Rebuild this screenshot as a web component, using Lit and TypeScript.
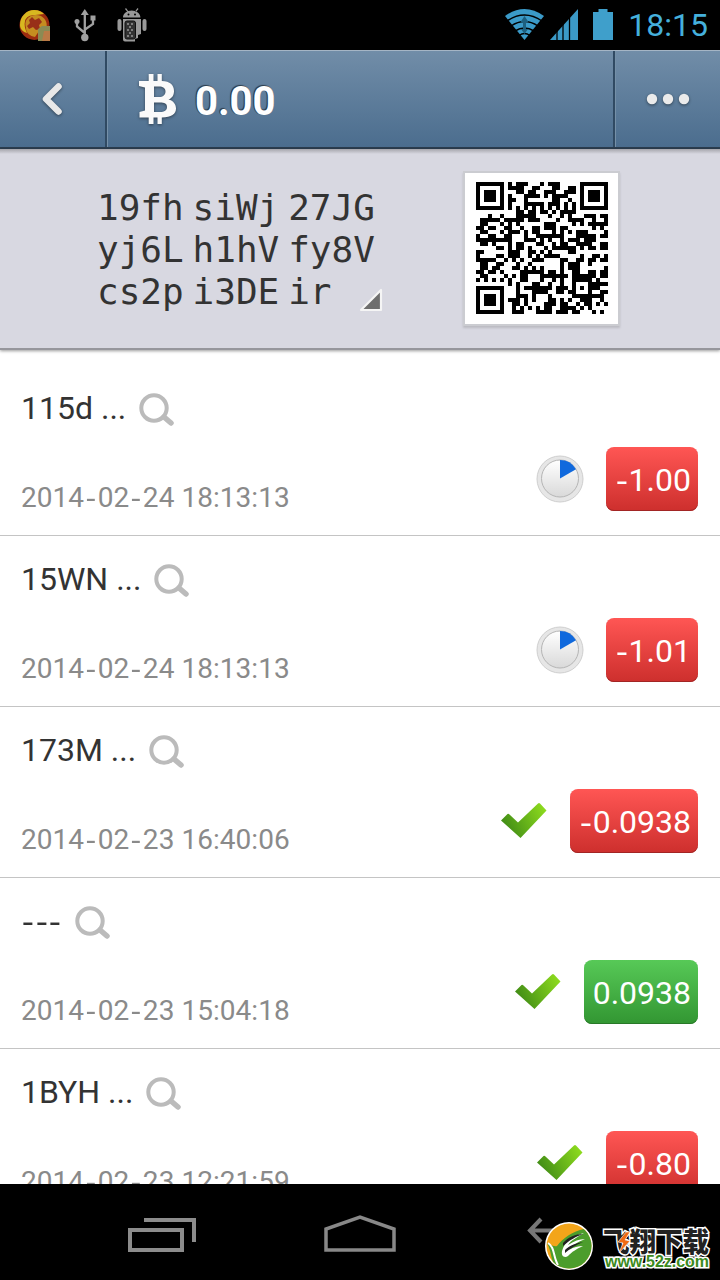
import { LitElement, html, css, svg } from "lit";
import { customElement, property } from "lit/decorators.js";
import { classMap } from "lit/directives/class-map.js";

/* ---- QR code: version 4, level H, byte mode, mask 7 ---- */
const SIZE = 33;

function gfMul(a: number, b: number): number {
  let r = 0;
  for (let i = 7; i >= 0; i--) {
    r = (r << 1) ^ ((r >>> 7) * 0x11d);
    r ^= ((b >>> i) & 1) * a;
  }
  return r & 0xff;
}

function generator(degree: number): number[] {
  const g = new Array(degree).fill(0);
  g[degree - 1] = 1;
  let root = 1;
  for (let i = 0; i < degree; i++) {
    for (let j = 0; j < degree; j++) {
      g[j] = gfMul(g[j], root);
      if (j + 1 < degree) g[j] ^= g[j + 1];
    }
    root = gfMul(root, 2);
  }
  return g;
}

function remainder(data: number[], gen: number[]): number[] {
  const r = gen.map(() => 0);
  for (const b of data) {
    const f = b ^ (r.shift() as number);
    r.push(0);
    gen.forEach((c, i) => (r[i] ^= gfMul(c, f)));
  }
  return r;
}

function qrPath(text: string): string {
  const bits: number[] = [];
  const put = (v: number, n: number) => {
    for (let i = n - 1; i >= 0; i--) bits.push((v >>> i) & 1);
  };
  put(4, 4);
  put(text.length, 8);
  for (const c of text) put(c.charCodeAt(0), 8);
  while (bits.length < 288) bits.push(0);
  const bytes: number[] = [];
  for (let i = 0; i < 288; i += 8) bytes.push(parseInt(bits.slice(i, i + 8).join(""), 2));

  const gen = generator(16);
  const blocks = [0, 1, 2, 3].map((i) => bytes.slice(i * 9, i * 9 + 9));
  const ecc = blocks.map((b) => remainder(b, gen));
  const words: number[] = [];
  for (let i = 0; i < 9; i++) for (const b of blocks) words.push(b[i]);
  for (let i = 0; i < 16; i++) for (const e of ecc) words.push(e[i]);

  const m: boolean[][] = Array.from({ length: SIZE }, () => new Array(SIZE).fill(false));
  const fn: boolean[][] = Array.from({ length: SIZE }, () => new Array(SIZE).fill(false));
  const set = (x: number, y: number, v: boolean) => {
    if (x < 0 || y < 0 || x >= SIZE || y >= SIZE) return;
    m[y][x] = v;
    fn[y][x] = true;
  };
  for (let i = 0; i < SIZE; i++) {
    set(6, i, i % 2 === 0);
    set(i, 6, i % 2 === 0);
  }
  for (const [cx, cy] of [[3, 3], [SIZE - 4, 3], [3, SIZE - 4]])
    for (let dy = -4; dy <= 4; dy++)
      for (let dx = -4; dx <= 4; dx++) {
        const d = Math.max(Math.abs(dx), Math.abs(dy));
        set(cx + dx, cy + dy, d !== 2 && d !== 4);
      }
  for (let dy = -2; dy <= 2; dy++)
    for (let dx = -2; dx <= 2; dx++)
      set(26 + dx, 26 + dy, Math.max(Math.abs(dx), Math.abs(dy)) !== 1);

  const fmt = 0b000100000111011;
  const bit = (i: number) => ((fmt >>> i) & 1) === 1;
  for (let i = 0; i <= 5; i++) set(8, i, bit(i));
  set(8, 7, bit(6));
  set(8, 8, bit(7));
  set(7, 8, bit(8));
  for (let i = 9; i < 15; i++) set(14 - i, 8, bit(i));
  for (let i = 0; i < 8; i++) set(SIZE - 1 - i, 8, bit(i));
  for (let i = 8; i < 15; i++) set(8, SIZE - 15 + i, bit(i));
  set(8, SIZE - 8, true);

  let k = 0;
  for (let right = SIZE - 1; right >= 1; right -= 2) {
    if (right === 6) right = 5;
    for (let v = 0; v < SIZE; v++)
      for (let j = 0; j < 2; j++) {
        const x = right - j;
        const up = ((right + 1) & 2) === 0;
        const y = up ? SIZE - 1 - v : v;
        if (fn[y][x]) continue;
        if (k < 800) m[y][x] = ((words[k >>> 3] >>> (7 - (k & 7))) & 1) === 1;
        k++;
        if ((((x + y) % 2) + ((x * y) % 3)) % 2 === 0) m[y][x] = !m[y][x];
      }
  }
  let d = "";
  m.forEach((row, y) => row.forEach((on, x) => (d += on ? `M${x} ${y}h1v1h-1z` : "")));
  return d;
}

interface Tx {
  addr: string;
  date: string;
  amount: string;
  confirmed: boolean;
}

@customElement("status-bar")
class StatusBar extends LitElement {
  static styles = css`
    :host { display: flex; height: 50px; background: #000; justify-content: space-between; }
    svg { display: block; }
    .clock { font: 32px/51px Roboto, sans-serif; color: #45b0dc; letter-spacing: 0; margin-left: 14px; }
    .right { display: flex; padding-right: 12px; }
  `;
  render() {
    return html`
      <svg width="160" height="50" viewBox="0 0 160 50">
        <circle cx="34.500" cy="25" r="15" fill="#9c2c10" />
        <path d="M20 25c0-9 7-15 14-15 5 0 8 2 10 4-3 0-6 1-9 1-5 0-9 2-10 6s0 8 2 12c-4-1-7-4-7-8z" fill="#d8b820" />
        <path d="M27 19c3-4 9-5 14-3 5 3 7 8 5 13l-7 2-4 6c-5-1-9-4-9-9-1-4-1-6 1-9z" fill="#c58d20" />
        <path d="M29 20l3-3 3 3 4-2 3 4-3 3 1 4-4 1-3-3-4 2-2-3 3-3z" fill="#982f18" />
        <path d="M38 29l4-3h8v15H38z" fill="#8a8b54" /><path d="M44 31h6v10h-8z" fill="#ba7a46" />
        <g fill="none" stroke="#a0a0a0" stroke-width="2.300">
          <path d="M84.800 14v23M77 23v3.500l7.800 6.500M93 19v5l-8 5.500" />
        </g>
        <path d="M84.800 9l4 6h-8z" fill="#a0a0a0" /><circle cx="84.800" cy="37.500" r="3.700" fill="#a0a0a0" /><circle cx="77" cy="21.500" r="2.500" fill="#a0a0a0" /><rect x="90.500" y="15.500" width="5" height="5" fill="#a0a0a0" />
        <g fill="#999">
          <path d="M123 17.500c0-4 4-7 8.700-7s8.700 3 8.700 7zM126 8l2.500 3.500-1 .5L125 9zM137.500 8L135 11.500l1 .5 2.500-3z" />
          <rect x="117.500" y="19" width="4" height="12" rx="2" /><rect x="142.500" y="19" width="4" height="12" rx="2" />
          <path d="M123 19h18v15l-3 1v3l-3 1v2.500h-10a2 2 0 0 1-2-2z" />
        </g>
        <rect x="125" y="21" width="10.500" height="18" rx="2" fill="#333" stroke="#111" />
        <g fill="#999"><circle cx="128" cy="24" r="1" /><circle cx="132" cy="24" r="1" /><circle cx="130" cy="27" r="1" /><circle cx="128" cy="30" r="1" /><circle cx="132" cy="30" r="1" /><circle cx="130" cy="33" r="1" /><circle cx="128" cy="36" r="1" /><circle cx="132" cy="36" r="1" /></g>
        <g fill="#000"><circle cx="128.500" cy="14.500" r="1" /><circle cx="135" cy="14.500" r="1" /></g>
      </svg>
      <div class="right">
        <svg width="110" height="50" viewBox="505 0 110 50">
          <path d="M525.500 40L506 16q19.500-14 39 0z" fill="#3b9ac8" />
          <g fill="none" stroke="#000" stroke-width="1.500">
            <path d="M508 21q17.500-12 35 0M512 26q13.500-9 27 0M516 31q9.500-6 19 0M520 35.500q5.500-4 11 0" />
          </g>
          <path d="M525.500 16l4 6h-2.500v7h2l-3.500 5-3.500-5h2v-7H521.500z" fill="#1d6080" />
          <path d="M551 40L579 9v31z" fill="#3b9ac8" />
          <path d="M558 28v13M564 22v19M570.500 15v26" stroke="#000" stroke-width="1.300" />
          <path d="M594 12h5.500V9h9v3h5.500v28h-20z" fill="#3f9fcb" />
        </svg>
        <span class="clock">18:15</span>
      </div>`;
  }
}

@customElement("title-bar")
class TitleBar extends LitElement {
  static styles = css`
    :host {
      display: flex; height: 99px; box-sizing: border-box; border-top: 1px solid #a5b5c5;
      border-bottom: 2px solid #2b3e50; background: linear-gradient(#718da8, #4b6d8e);
      font-family: Roboto, sans-serif;
    }
    .side { width: 105px; display: grid; place-items: center; }
    .mid { flex: 1; display: flex; align-items: center; border: solid #304a63; border-width: 0 2px 0 2px; padding-left: 32px; box-shadow: 1px 0 0 #7590a8, inset 1px 0 0 #7590a8; }
    .bal { font-size: 40px; font-weight: 700; color: #fff; margin-left: 18px; line-height: 48px; padding-top: 6px; text-shadow: -1px -1px 1px #2b3a48, -1px 0 0 #3a4b5c; }
    svg { display: block; filter: drop-shadow(0 1.500px 1.500px #0007); }
  `;
  render() {
    return html`
      <div class="side">
        <svg width="24" height="34" viewBox="0 0 24 34"><defs><linearGradient id="w" x2="0" y2="1"><stop stop-color="#fff" /><stop offset="1" stop-color="#d6d6d6" /></linearGradient></defs>
          <path d="M17.500 4.500L5 17l12.500 12.500" fill="none" stroke="#e8e8e8" stroke-width="6.500" stroke-linecap="round" stroke-linejoin="round" /></svg>
      </div>
      <div class="mid">
        <svg width="38" height="51" viewBox="0 0 38 51"><path fill="#fafafa" fill-rule="evenodd" d="M0 7h9.700V0h4.800v7h4V0h4.300v7C31 7.300 35 11 35 17c0 4.500-2 7-5.500 8.500 5 1.200 7.500 5 7.500 9 0 5.500-4.500 9-14.200 9V50h-4.300v-6.500h-4V50H9.700v-6.500H.5v-5.500L6 36.500V13.500L0 12zM15 12.500V23h5c4 0 6.500-2 6.500-5.500S24 12.500 20 12.500zM15 28.500v9.500h6c4.500 0 7-1.500 7-5s-2.500-4.500-7-4.500z" /></svg>
        <span class="bal">0.00</span>
      </div>
      <div class="side">
        <svg width="44" height="14" viewBox="0 0 44 14">${[6, 22, 38].map((x) => svg`<circle cx=${x} cy="7" r="5.200" fill="#ebebeb" />`)}</svg>
      </div>`;
  }
}

@customElement("address-card")
class AddressCard extends LitElement {
  @property() address = "";
  static styles = css`
    :host { display: flex; height: 201px; box-sizing: border-box; background: linear-gradient(#a5a5ab, #d8d8e1 5px); border-bottom: 2px solid #96969c; padding: 22px 98px 0 97px; justify-content: space-between; box-shadow: 0 1px 3px #0006; position: relative; }
    .box { display: flex; align-items: flex-start; }
    .groups { display: grid; grid-template-columns: repeat(3, 95.600px); grid-auto-rows: 42px; width: 260px; padding-top: 16px; font: 36px/42px "DejaVu Sans Mono", monospace; color: #333; }
    .corner { display: block; margin-top: 116px; }
    .frame { box-sizing: border-box; width: 157px; height: 155px; padding: 9px 8px 10px 11px; background: #fff; border: 2px solid #cbccd1; box-shadow: 0 2px 2px #bbbbc2; margin-right: 2px; }
    .frame svg { display: block; }
  `;
  render() {
    return html`
      <div class="box">
        <div class="groups">${(this.address.match(/.{1,4}/g) || []).map((g) => html`<span>${g}</span>`)}</div>
        <svg class="corner" width="28" height="28" viewBox="0 0 28 28"><path d="M24 3v20H4z" fill="#6e6e6e" stroke="#f5f5f5" stroke-width="2.200" stroke-linejoin="round" /></svg>
      </div>
      <div class="frame"><svg width="132" height="132" viewBox="0 0 33 33" shape-rendering="crispEdges"><path d=${qrPath(this.address)} /></svg></div>`;
  }
}

@customElement("tx-row")
class TxRow extends LitElement {
  @property({ attribute: false }) tx!: Tx;
  static styles = css`
    :host { display: flex; flex: none; height: 171px; box-sizing: border-box; border-bottom: 1px solid #c4c4c4; padding: 0 22px 0 21px; justify-content: space-between; font-family: Roboto, sans-serif; }
    svg { display: block; }
    .left { display: flex; flex-direction: column; }
    .addr { display: flex; height: 86px; align-items: center; color: #333; font-size: 32px; white-space: pre; }
    .addr svg { margin: 4px 0 0 13px; }
    .date { font-size: 28px; line-height: 40px; margin-top: 27px; color: #8a8a8a; letter-spacing: 0.040px; }
    .dash { display: inline-block; width: 13.600px; text-align: center; font-family: "Liberation Sans", sans-serif; transform: scaleX(1.150); }
    .right { display: flex; align-items: center; gap: 22px; align-self: flex-start; margin-top: 82px; }
    .amt { height: 64px; box-sizing: border-box; border-radius: 8px; padding: 1px 7px 0 9px; font-size: 32px; line-height: 65px; color: #fff; background: linear-gradient(#ff5654, #cd2f2d); box-shadow: inset 0 -1px 0 #a22524; }
    .in { background: linear-gradient(#57c957, #329632); box-shadow: inset 0 -1px 0 #287828; }
  `;
  private dashed(s: string) {
    return s.split(/(-)/).filter(Boolean).map((p) => (p === "-" ? html`<span class="dash">-</span>` : p));
  }
  render() {
    const t = this.tx;
    return html`
      <div class="left">
        <div class="addr"><span>${this.dashed(t.addr)}</span><svg width="36" height="34" viewBox="0 0 36 34"><circle cx="15" cy="15" r="12.700" fill="none" stroke="#bbb" stroke-width="4" /><path d="M25 24l7 6" stroke="#bbb" stroke-width="5.500" stroke-linecap="round" /></svg></div>
        <div class="date">${this.dashed(t.date)}</div>
      </div>
      <div class="right">
        ${t.confirmed
          ? html`<svg width="48" height="38" viewBox="0 0 48 38"><defs><linearGradient id="c" x1="0" y1=".6" x2="1" y2=".2"><stop stop-color="#3f8a16" /><stop offset="1" stop-color="#8edc1e" /></linearGradient></defs><path d="M1 18.500L7.500 12q1-.5 2 .5l8.500 8L38 1.500q1-1 2 0l6.500 7L20.500 36z" fill="url(#c)" /></svg>`
          : html`<svg width="48" height="48" viewBox="0 0 48 48"><defs><linearGradient id="d" x2="0" y2="1"><stop stop-color="#fff" /><stop offset="1" stop-color="#d9d9d9" /></linearGradient></defs><circle cx="24" cy="24" r="23" fill="#e6e6e6" stroke="#cfcfcf" /><circle cx="24" cy="23.500" r="18.500" fill="url(#d)" stroke="#b5b5b5" /><path d="M24 23.500V5a18.500 18.500 0 0 1 16 9.200z" fill="#1069dd" /></svg>`}
        <div class=${classMap({ amt: true, in: !t.amount.startsWith("-") })}>${this.dashed(t.amount)}</div>
      </div>`;
  }
}

@customElement("nav-bar")
class NavBar extends LitElement {
  static styles = css`
    :host { display: block; height: 96px; background: #000; }
    svg { display: block; }
    .cn { font: 900 27px "Noto Sans CJK SC", sans-serif; fill: #222; stroke: #fff; stroke-width: 3px; paint-order: stroke; }
    .url { font: 700 16px "Liberation Sans", sans-serif; fill: #3c8a20; stroke: #fff; stroke-width: 3px; paint-order: stroke; }
  `;
  render() {
    return html`<svg width="720" height="96" viewBox="0 1184 720 96">
      <g fill="none" stroke="#888" stroke-width="4">
        <path d="M130 1230h52v20h-52zM144 1220h50v22" stroke="#8c8c8c" />
        <path d="M326 1250v-21l34-12 34 12v21z" stroke-width="3.500" />
        <path d="M541 1219l-11 11.500 11 11.500M529 1230.500h24" stroke-width="4" stroke="#777" />
      </g>
      <defs><clipPath id="disc"><circle cx="569" cy="1246" r="22.500" /></clipPath></defs>
      <circle cx="569" cy="1246" r="24" fill="#fff" />
      <g clip-path="url(#disc)">
        <rect x="545" y="1222" width="48" height="48" fill="#f3a51a" />
        <path d="M547 1243q7 4 10 3c6-8 16-15 27-17l10 10v34h-34c-4-6-8-11-9-18-1-5-2-8-4-12z" fill="#4c9d2c" />
        <path d="M548 1243c7 4 5 14 10 22" stroke="#fff" stroke-width="2" fill="none" />
        <path d="M562 1251c3-10 10-15 22-18-6 4-13 7-16 12 6-4 11-6 17-6-7 3-13 6-16 11 5-3 9-4 14-4-7 3-11 6-15 10-3 2-7 1-6-5z" fill="#fff" />
        <path d="M563 1243c5-6 13-9 20-9-8 3-13 6-20 12zM565 1250c5-5 12-7 18-8-7 3-12 6-18 11z" fill="#222" />
      </g>
      <text class="cn" x="603" y="1252" textLength="106" lengthAdjust="spacingAndGlyphs">飞翔下载</text>
      <path d="M626 1232l-8 10 5 1-4 10 11-12-5-1 5-8z" fill="#f26a12" stroke="#fff" stroke-width=".6" />
      <text class="url" x="605" y="1266.500" textLength="104" lengthAdjust="spacingAndGlyphs">www.52z.com</text>
    </svg>`;
  }
}

@customElement("app-root")
class AppRoot extends LitElement {
  static styles = css`
    :host { display: flex; flex-direction: column; width: 720px; height: 1280px; overflow: hidden; background: #fff; }
    status-bar, title-bar, address-card, nav-bar { flex: none; }
    .list { flex: 1; min-height: 0; overflow: hidden; display: flex; flex-direction: column; padding-top: 15px; }
  `;
  txs: Tx[] = [
    { addr: "115d ...", date: "2014-02-24 18:13:13", amount: "-1.00", confirmed: false },
    { addr: "15WN ...", date: "2014-02-24 18:13:13", amount: "-1.01", confirmed: false },
    { addr: "173M ...", date: "2014-02-23 16:40:06", amount: "-0.0938", confirmed: true },
    { addr: "---", date: "2014-02-23 15:04:18", amount: "0.0938", confirmed: true },
    { addr: "1BYH ...", date: "2014-02-23 12:21:59", amount: "-0.80", confirmed: true },
  ];
  render() {
    return html`
      <status-bar></status-bar>
      <title-bar></title-bar>
      <address-card address="19fhsiWj27JGyj6Lh1hVfy8Vcs2pi3DEir"></address-card>
      <div class="list">${this.txs.map((t) => html`<tx-row .tx=${t}></tx-row>`)}</div>
      <nav-bar></nav-bar>`;
  }
}
